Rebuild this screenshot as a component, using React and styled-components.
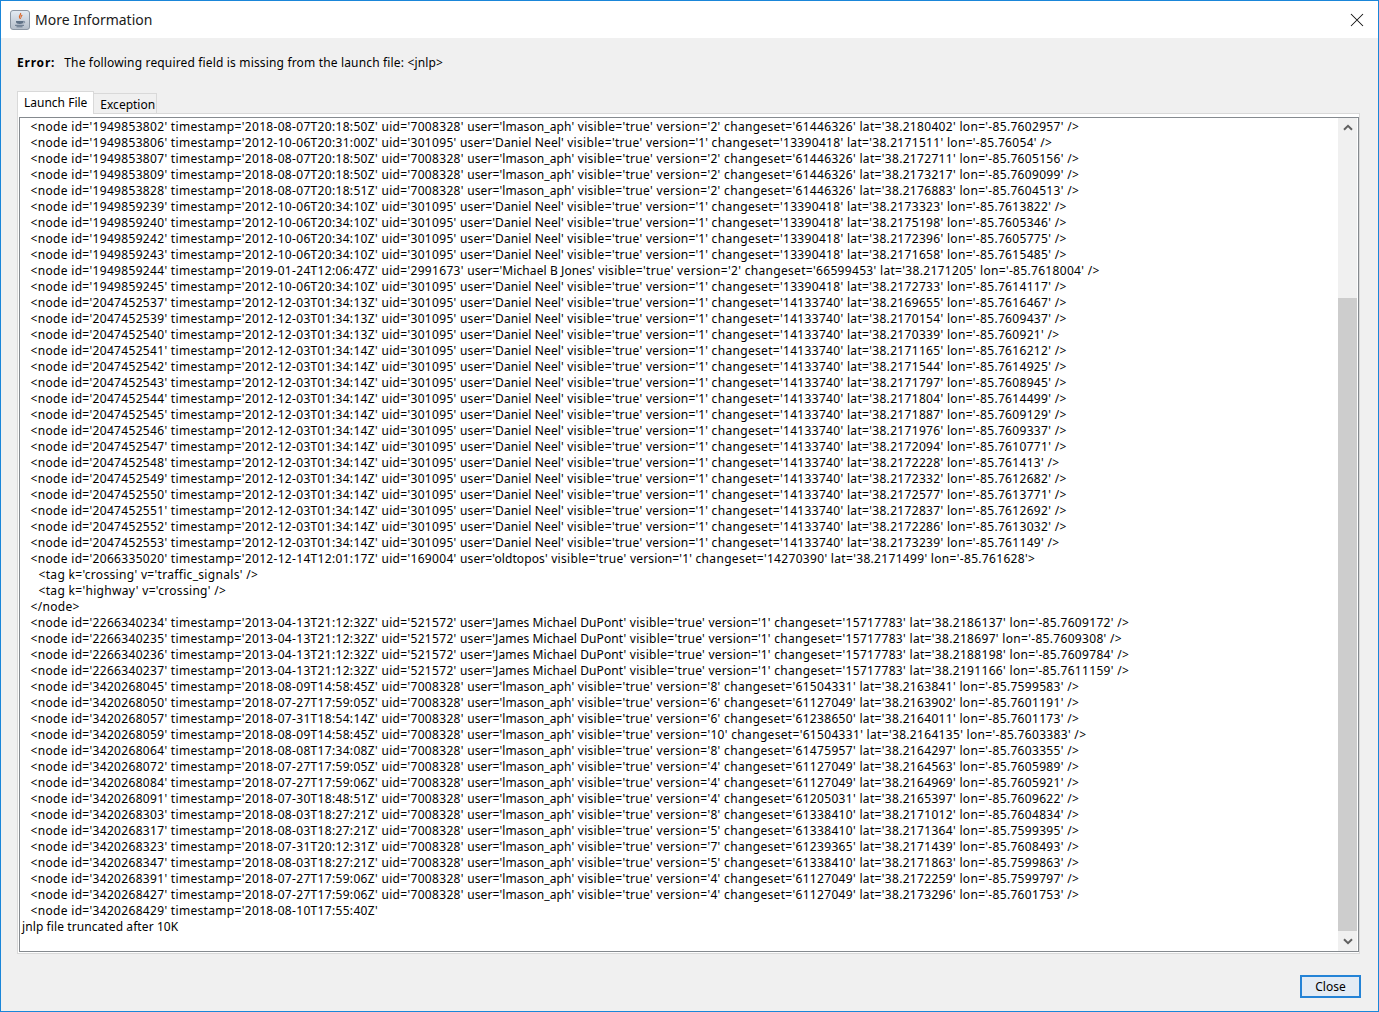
import React from "react";
import styled, { createGlobalStyle } from "styled-components";

const Global = createGlobalStyle`
  html, body { margin: 0; padding: 0; background: #fff; }
  #root { width: 1379px; height: 1012px; overflow: hidden; }
`;

const F = `"Noto Sans", "Open Sans", sans-serif`;

const Win = styled.div`
  box-sizing: border-box;
  width: 1379px;
  height: 1012px;
  border: 1px solid #1a86d9;
  display: flex;
  flex-direction: column;
  background: #f0f0f0;
  font-family: ${F};
  color: #000;
`;
const TitleBar = styled.header`
  height: 37px;
  flex: none;
  background: #fff;
  display: flex;
  align-items: center;
  padding: 0 14px 0 9px;
  gap: 5px;
`;
const TitleText = styled.span`
  font-size: 14px;
  color: #1a1a1a;
  flex: 1;
  line-height: 20px;
`;
const Body = styled.main`
  flex: 1;
  display: flex;
  flex-direction: column;
  padding: 14px 18px 13px 16px;
  min-height: 0;
`;
const ErrorRow = styled.div`
  height: 20px;
  display: flex;
  align-items: center;
  gap: 9px;
  font-size: 12px;
`;
const ErrorLabel = styled.b`
  font-weight: 700;
  letter-spacing: 0.8px;
`;
const ErrorText = styled.span`
  letter-spacing: 0.16px;
`;
const Tabs = styled.div`
  display: flex;
  align-items: flex-end;
  height: 22px;
  margin-top: 19px;
  position: relative;
  z-index: 1;
`;
const Tab = styled.div`
  box-sizing: border-box;
  height: ${(p) => (p.$active ? 23 : 20)}px;
  padding: ${(p) => (p.$active ? "0 6px 2px 6px" : "2px 1px 0 6px")};
  border: 1px solid #d9d9d9;
  border-bottom: none;
  background: ${(p) => (p.$active ? "#fff" : "#f0f0f0")};
  font-size: 12px;
  display: flex;
  align-items: center;
  ${(p) => (p.$active ? "margin-bottom:-1px;" : "border-left:none;")}
`;
const Panel = styled.section`
  box-sizing: border-box;
  flex: 1;
  min-height: 0;
  background: #fff;
  border: 1px solid #d9d9d9;
  padding: 3px 0 1px 1px;
  display: flex;
`;
const Scroller = styled.div`
  flex: 1;
  min-width: 0;
  border: 1px solid #858a8f;
  display: flex;
  background: #fff;
`;
const Viewport = styled.div`
  flex: 1;
  min-width: 0;
  overflow: hidden;
  padding-top: 1px;
  padding-left: 2px;
`;
const Line = styled.div`
  height: 16px;
  line-height: 16px;
  font-size: 12px;
  white-space: pre;
  letter-spacing: ${(p) => (p.$indent ? 0.32 : 0.09)}px;
  padding-left: ${(p) => (p.$indent ? p.$indent * 4 + 0.5 : 0)}px;
`;
const UserName = styled.span`
  letter-spacing: 0.1px;
`;
const VersionAttr = styled.span`
  letter-spacing: ${(p) => (p.$narrow ? 0.15 : 0.33)}px;
`;
const ScrollBar = styled.div`
  width: 19px;
  flex: none;
  margin-right: 1px;
  background: #f0f0f0;
  display: flex;
  flex-direction: column;
`;
const ArrowBox = styled.div`
  height: 19px;
  flex: none;
  display: flex;
  align-items: center;
  justify-content: center;
`;
const Track = styled.div`
  flex: 1;
  display: flex;
  flex-direction: column;
  padding: 161px 0 1px;
`;
const Thumb = styled.div`
  flex: 1;
  background: #cdcdcd;
`;
const Footer = styled.footer`
  display: flex;
  justify-content: flex-end;
  margin-top: 21px;
`;
const CloseBtn = styled.button`
  box-sizing: border-box;
  width: 61px;
  height: 23px;
  margin-right: -1px;
  border: 2px solid #2483d6;
  background: #e3ebf4;
  padding: 0;
  font: 12px ${F};
  color: #000;
`;

const n = (id, ts, uid, user, ver, cs, lat, lon, tail = " />") => (
  <>
    {`<node id='${id}' timestamp='${ts}' uid='${uid}' `}
    <UserName>{`user='${user}'`}</UserName>
    {" visible='true' "}
    <VersionAttr $narrow={ver === 1}>{`version='${ver}'`}</VersionAttr>
    {` changeset='${cs}' lat='${lat}' lon='${lon}'${tail}`}
  </>
);
const L = "lmason_aph";
const D = "Daniel Neel";
const J = "James Michael DuPont";

const rows = [
  [2, n("1949853802", "2018-08-07T20:18:50Z", "7008328", L, 2, "61446326", "38.2180402", "-85.7602957")],
  [2, n("1949853806", "2012-10-06T20:31:00Z", "301095", D, 1, "13390418", "38.2171511", "-85.76054")],
  [2, n("1949853807", "2018-08-07T20:18:50Z", "7008328", L, 2, "61446326", "38.2172711", "-85.7605156")],
  [2, n("1949853809", "2018-08-07T20:18:50Z", "7008328", L, 2, "61446326", "38.2173217", "-85.7609099")],
  [2, n("1949853828", "2018-08-07T20:18:51Z", "7008328", L, 2, "61446326", "38.2176883", "-85.7604513")],
  [2, n("1949859239", "2012-10-06T20:34:10Z", "301095", D, 1, "13390418", "38.2173323", "-85.7613822")],
  [2, n("1949859240", "2012-10-06T20:34:10Z", "301095", D, 1, "13390418", "38.2175198", "-85.7605346")],
  [2, n("1949859242", "2012-10-06T20:34:10Z", "301095", D, 1, "13390418", "38.2172396", "-85.7605775")],
  [2, n("1949859243", "2012-10-06T20:34:10Z", "301095", D, 1, "13390418", "38.2171658", "-85.7615485")],
  [2, n("1949859244", "2019-01-24T12:06:47Z", "2991673", "Michael B Jones", 2, "66599453", "38.2171205", "-85.7618004")],
  [2, n("1949859245", "2012-10-06T20:34:10Z", "301095", D, 1, "13390418", "38.2172733", "-85.7614117")],
  [2, n("2047452537", "2012-12-03T01:34:13Z", "301095", D, 1, "14133740", "38.2169655", "-85.7616467")],
  [2, n("2047452539", "2012-12-03T01:34:13Z", "301095", D, 1, "14133740", "38.2170154", "-85.7609437")],
  [2, n("2047452540", "2012-12-03T01:34:13Z", "301095", D, 1, "14133740", "38.2170339", "-85.760921")],
  [2, n("2047452541", "2012-12-03T01:34:14Z", "301095", D, 1, "14133740", "38.2171165", "-85.7616212")],
  [2, n("2047452542", "2012-12-03T01:34:14Z", "301095", D, 1, "14133740", "38.2171544", "-85.7614925")],
  [2, n("2047452543", "2012-12-03T01:34:14Z", "301095", D, 1, "14133740", "38.2171797", "-85.7608945")],
  [2, n("2047452544", "2012-12-03T01:34:14Z", "301095", D, 1, "14133740", "38.2171804", "-85.7614499")],
  [2, n("2047452545", "2012-12-03T01:34:14Z", "301095", D, 1, "14133740", "38.2171887", "-85.7609129")],
  [2, n("2047452546", "2012-12-03T01:34:14Z", "301095", D, 1, "14133740", "38.2171976", "-85.7609337")],
  [2, n("2047452547", "2012-12-03T01:34:14Z", "301095", D, 1, "14133740", "38.2172094", "-85.7610771")],
  [2, n("2047452548", "2012-12-03T01:34:14Z", "301095", D, 1, "14133740", "38.2172228", "-85.761413")],
  [2, n("2047452549", "2012-12-03T01:34:14Z", "301095", D, 1, "14133740", "38.2172332", "-85.7612682")],
  [2, n("2047452550", "2012-12-03T01:34:14Z", "301095", D, 1, "14133740", "38.2172577", "-85.7613771")],
  [2, n("2047452551", "2012-12-03T01:34:14Z", "301095", D, 1, "14133740", "38.2172837", "-85.7612692")],
  [2, n("2047452552", "2012-12-03T01:34:14Z", "301095", D, 1, "14133740", "38.2172286", "-85.7613032")],
  [2, n("2047452553", "2012-12-03T01:34:14Z", "301095", D, 1, "14133740", "38.2173239", "-85.761149")],
  [2, n("2066335020", "2012-12-14T12:01:17Z", "169004", "oldtopos", 1, "14270390", "38.2171499", "-85.761628", ">")],
  [4, "<tag k='crossing' v='traffic_signals' />"],
  [4, "<tag k='highway' v='crossing' />"],
  [2, "</node>"],
  [2, n("2266340234", "2013-04-13T21:12:32Z", "521572", J, 1, "15717783", "38.2186137", "-85.7609172")],
  [2, n("2266340235", "2013-04-13T21:12:32Z", "521572", J, 1, "15717783", "38.218697", "-85.7609308")],
  [2, n("2266340236", "2013-04-13T21:12:32Z", "521572", J, 1, "15717783", "38.2188198", "-85.7609784")],
  [2, n("2266340237", "2013-04-13T21:12:32Z", "521572", J, 1, "15717783", "38.2191166", "-85.7611159")],
  [2, n("3420268045", "2018-08-09T14:58:45Z", "7008328", L, 8, "61504331", "38.2163841", "-85.7599583")],
  [2, n("3420268050", "2018-07-27T17:59:05Z", "7008328", L, 6, "61127049", "38.2163902", "-85.7601191")],
  [2, n("3420268057", "2018-07-31T18:54:14Z", "7008328", L, 6, "61238650", "38.2164011", "-85.7601173")],
  [2, n("3420268059", "2018-08-09T14:58:45Z", "7008328", L, 10, "61504331", "38.2164135", "-85.7603383")],
  [2, n("3420268064", "2018-08-08T17:34:08Z", "7008328", L, 8, "61475957", "38.2164297", "-85.7603355")],
  [2, n("3420268072", "2018-07-27T17:59:05Z", "7008328", L, 4, "61127049", "38.2164563", "-85.7605989")],
  [2, n("3420268084", "2018-07-27T17:59:06Z", "7008328", L, 4, "61127049", "38.2164969", "-85.7605921")],
  [2, n("3420268091", "2018-07-30T18:48:51Z", "7008328", L, 4, "61205031", "38.2165397", "-85.7609622")],
  [2, n("3420268303", "2018-08-03T18:27:21Z", "7008328", L, 8, "61338410", "38.2171012", "-85.7604834")],
  [2, n("3420268317", "2018-08-03T18:27:21Z", "7008328", L, 5, "61338410", "38.2171364", "-85.7599395")],
  [2, n("3420268323", "2018-07-31T20:12:31Z", "7008328", L, 7, "61239365", "38.2171439", "-85.7608493")],
  [2, n("3420268347", "2018-08-03T18:27:21Z", "7008328", L, 5, "61338410", "38.2171863", "-85.7599863")],
  [2, n("3420268391", "2018-07-27T17:59:06Z", "7008328", L, 4, "61127049", "38.2172259", "-85.7599797")],
  [2, n("3420268427", "2018-07-27T17:59:06Z", "7008328", L, 4, "61127049", "38.2173296", "-85.7601753")],
  [2, "<node id='3420268429' timestamp='2018-08-10T17:55:40Z'"],
  [0, "jnlp file truncated after 10K"],
];

const JavaIcon = () => (
  <svg width="20" height="20" viewBox="0 0 20 20" aria-hidden="true">
    <defs>
      <linearGradient id="jbg" x1="0" y1="0" x2="0" y2="1">
        <stop offset="0" stopColor="#e4ebf3" />
        <stop offset="1" stopColor="#b4bdc9" />
      </linearGradient>
    </defs>
    <rect x="0.5" y="0.5" width="19" height="19" rx="2.5" fill="url(#jbg)" stroke="#8b96a3" />
    <path d="M10.5 3c1 1.5-1.8 2.5-1 4.3.3.7.9 1 1 1.7M12.3 5c-1.2.7-1.6 1.4-1 2.6" fill="none" stroke="#d9662a" strokeWidth="1.2" />
    <path d="M6 11h7.5v.8c0 1.4-1.2 2.2-3.7 2.2S6 13.2 6 11.8z" fill="#5f7186" />
    <path d="M13.5 11.3c1.6-.2 1.8 1.4.1 1.8" fill="none" stroke="#5f7186" strokeWidth=".8" />
    <path d="M5 15.3h9M6.5 16.8h6" stroke="#5f7186" strokeWidth="1" />
  </svg>
);

const CloseIcon = () => (
  <svg width="14" height="14" viewBox="0 0 14 14" aria-hidden="true">
    <path d="M1 1l12 12M13 1L1 13" stroke="#111" strokeWidth="1.05" fill="none" />
  </svg>
);

const Chevron = ({ down }) => (
  <svg width="10" height="7" viewBox="0 0 10 7" aria-hidden="true">
    <path d={down ? "M1 1.2l4 4 4-4" : "M1 5.8l4-4 4 4"} stroke="#606060" strokeWidth="2" fill="none" />
  </svg>
);

export default function App() {
  return (
    <Win>
      <Global />
      <TitleBar>
        <JavaIcon />
        <TitleText>More Information</TitleText>
        <CloseIcon />
      </TitleBar>
      <Body>
        <ErrorRow>
          <ErrorLabel>Error:</ErrorLabel>
          <ErrorText>The following required field is missing from the launch file: &lt;jnlp&gt;</ErrorText>
        </ErrorRow>
        <Tabs>
          <Tab $active>Launch File</Tab>
          <Tab>Exception</Tab>
        </Tabs>
        <Panel>
          <Scroller>
            <Viewport>
              {rows.map(([indent, text], i) => (
                <Line key={i} $indent={indent}>{text}</Line>
              ))}
            </Viewport>
            <ScrollBar>
              <ArrowBox><Chevron /></ArrowBox>
              <Track><Thumb /></Track>
              <ArrowBox><Chevron down /></ArrowBox>
            </ScrollBar>
          </Scroller>
        </Panel>
        <Footer>
          <CloseBtn>Close</CloseBtn>
        </Footer>
      </Body>
    </Win>
  );
}
